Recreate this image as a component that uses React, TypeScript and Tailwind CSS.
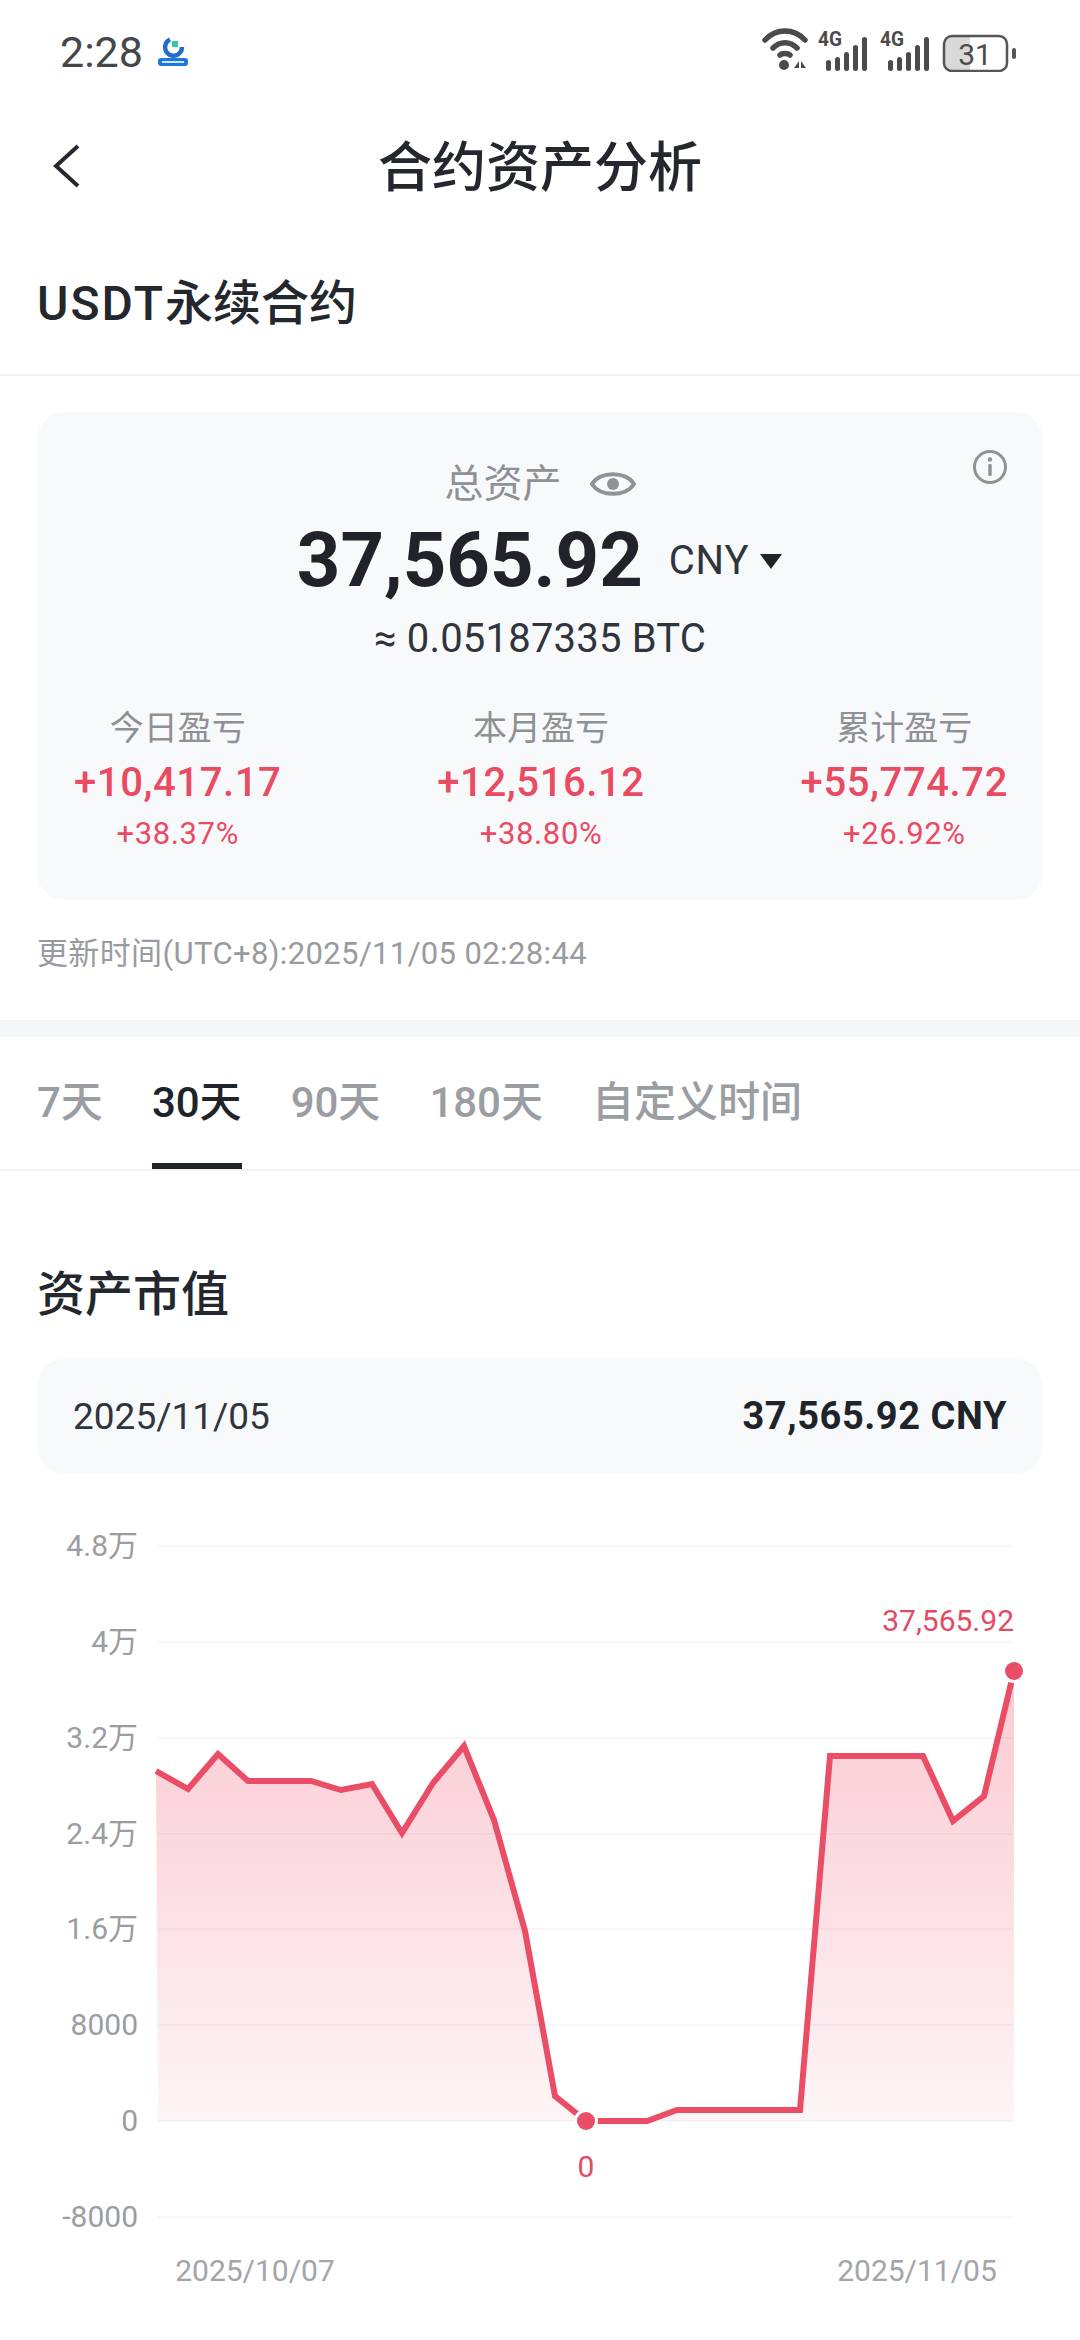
// Contract asset analysis screen
import type { ReactNode } from 'react';

const stats = [
  { label: '今日盈亏', value: '+10,417.17', pct: '+38.37%' },
  { label: '本月盈亏', value: '+12,516.12', pct: '+38.80%' },
  { label: '累计盈亏', value: '+55,774.72', pct: '+26.92%' },
];

const tabs = ['7天', '30天', '90天', '180天', '自定义时间'];

const yTicks = [
  { label: '4.8万', y: 46 },
  { label: '4万', y: 142 },
  { label: '3.2万', y: 238 },
  { label: '2.4万', y: 334 },
  { label: '1.6万', y: 429 },
  { label: '8000', y: 525 },
  { label: '0', y: 621 },
  { label: '-8000', y: 717 },
];

// chart line, y is relative to the top of the svg (page y 1500)
const points: [number, number][] = [
  [156, 271], [188, 289], [218, 254], [248, 281], [279, 281], [311, 281], [341, 290],
  [372, 284], [402, 333], [433, 283], [464, 246], [494, 320], [525, 431], [555, 596],
  [586, 621], [616, 621], [647, 621], [677, 610], [708, 610], [739, 610], [769, 610],
  [800, 610], [830, 256], [861, 256], [892, 256], [923, 256], [953, 321], [984, 296],
  [1014, 171],
];

const linePath = points.map(([x, y]) => `${x},${y}`).join(' ');
const areaPath = `158,621 ${linePath} 1014,621`;

function StatusIcons() {
  return (
    <svg width="262" height="44" viewBox="0 0 262 44" className="block -mt-[4px]">
      {/* wifi */}
      <g fill="none" stroke="#4b4b4b" strokeWidth="5.5" strokeLinecap="round">
        <path d="M3 12 C14 0 32 0 43 12" />
        <path d="M11 20 C18 13 28 13 35 20" />
        <path d="M18 27 C20 25 26 25 28 27" />
      </g>
      <circle cx="22" cy="37" r="5" fill="#4b4b4b" />
      <path d="M32 40 L37 33 V40 Z M39 33 L44 40 H39 Z" fill="#4b4b4b" />
      {/* sim 1 and sim 2 */}
      {[0, 62].map((dx) => (
        <g key={dx} transform={`translate(${dx} 0)`} fill="#4b4b4b">
          <text x="56" y="18" fontSize="21" fontWeight="700" fontFamily="Roboto, sans-serif" textLength="24" lengthAdjust="spacingAndGlyphs">4G</text>
          <rect x="64" y="32" width="5" height="11" rx="2.5" />
          <rect x="73" y="29" width="5" height="14" rx="2.5" />
          <rect x="82" y="24" width="5" height="19" rx="2.5" />
          <rect x="91" y="17" width="5" height="26" rx="2.5" />
          <rect x="100" y="9" width="5" height="34" rx="2.5" />
        </g>
      ))}
      {/* battery */}
      <path d="M190 9 H208 V42 H190 Q183 42 183 35 V16 Q183 9 190 9 Z" fill="#d9d9d9" />
      <rect x="182" y="8" width="63" height="35" rx="8" fill="none" stroke="#555555" strokeWidth="2.5" />
      <rect x="250" y="20" width="4" height="11" rx="2" fill="#555555" />
      <text x="213" y="37" textAnchor="middle" fontSize="30" fontFamily="Roboto, sans-serif" fill="#4b4b4b">31</text>
    </svg>
  );
}

function AppBadge() {
  return (
    <svg width="32" height="30" viewBox="0 0 32 30" className="block ml-[14px]">
      <path d="M13 2.5 A8.5 8.5 0 1 0 25 10" fill="none" stroke="#1f6bd0" strokeWidth="4.5" />
      <rect x="15" y="4" width="6" height="6" fill="#35c8a5" />
      <rect x="1" y="21" width="30" height="8" rx="3" fill="#1f78dc" />
      <rect x="5" y="24" width="22" height="2" fill="#cfe4fb" />
    </svg>
  );
}

function SectionText({ children, className }: { children: ReactNode; className: string }) {
  return <div className={`text-[#24272d] font-medium ${className}`}>{children}</div>;
}

function Chart() {
  return (
    <svg width="1080" height="840" viewBox="0 0 1080 840" className="block">
      <defs>
        <linearGradient id="area" gradientUnits="userSpaceOnUse" x1="0" y1="171" x2="0" y2="621">
          <stop offset="0" stopColor="#f9c0c9" />
          <stop offset="1" stopColor="#fdf3f5" />
        </linearGradient>
      </defs>

      <polygon points={areaPath} fill="url(#area)" fillOpacity="0.85" />

      {yTicks.map((t) => (
        <g key={t.label}>
          <line x1="158" x2="1013" y1={t.y} y2={t.y} stroke="#20232a" strokeOpacity="0.05" strokeWidth="1.5" />
          <text x="138" y={t.y + 10} textAnchor="end" fontSize="30" fill="#9a9da2">{t.label}</text>
        </g>
      ))}

      <polyline points={linePath} fill="none" stroke="#ea4d66" strokeWidth="6" strokeLinejoin="miter" />

      <circle cx="586" cy="621" r="12" fill="#ffffff" />
      <circle cx="586" cy="621" r="9" fill="#ea4d66" />
      <circle cx="1014" cy="171" r="12" fill="#ffffff" />
      <circle cx="1014" cy="171" r="9" fill="#ea4d66" />

      <text x="1014" y="131" textAnchor="end" fontSize="30" fill="#e04c66">37,565.92</text>
      <text x="586" y="677" textAnchor="middle" fontSize="30" fill="#e04c66">0</text>

      <text x="255" y="781" textAnchor="middle" fontSize="30" fill="#a2a5a9">2025/10/07</text>
      <text x="917" y="781" textAnchor="middle" fontSize="30" fill="#a2a5a9">2025/11/05</text>
    </svg>
  );
}

export default function App() {
  return (
    <div className="w-[1080px] h-[2340px] overflow-hidden bg-white [font-family:Roboto,'Noto_Sans_CJK_SC',sans-serif]">
      {/* Status bar */}
      <div className="h-[104px] flex items-center justify-between pl-[60px] pr-[56px]">
        <div className="flex items-center">
          <span className="text-[43px] leading-[48px] text-[#45474b]">2:28</span>
          <AppBadge />
        </div>
        <StatusIcons />
      </div>

      {/* Header */}
      <div className="h-[124px] grid grid-cols-[1fr_auto_1fr] items-center pl-[52px]">
        <svg width="30" height="44" viewBox="0 0 30 44" className="block">
          <polyline points="26,2 4,22 26,42" fill="none" stroke="#25282e" strokeWidth="4" />
        </svg>
        <SectionText className="text-[54px] leading-[64px] -ml-[52px] mt-[5px]">合约资产分析</SectionText>
        <div />
      </div>

      {/* Account */}
      <div className="h-[148px] flex items-center px-[37px] pt-[6px] border-b-2 border-[#f1f2f4]">
        <SectionText className="text-[48px] leading-[56px]">
          <span className="tracking-[2px]">USDT</span>永续合约
        </SectionText>
      </div>

      {/* Total assets card */}
      <div className="relative mx-[37px] mt-[36px] h-[488px] rounded-[28px] bg-[#f8f9fb] pt-[50px]">
        <svg width="36" height="36" viewBox="0 0 36 36" className="absolute right-[35px] top-[37px]">
          <circle cx="18" cy="18" r="15.5" fill="none" stroke="#8f9298" strokeWidth="3" />
          <circle cx="18" cy="10.5" r="2.2" fill="#8f9298" />
          <rect x="16.3" y="15" width="3.4" height="12" rx="1" fill="#8f9298" />
        </svg>

        <div className="flex items-center justify-center h-[44px] gap-[28px]">
          <span className="text-[39px] leading-[44px] text-[#8d9095]">总资产</span>
          <svg width="46" height="32" viewBox="0 0 46 32" className="block">
            <path d="M2 16 C10 3 36 3 44 16 C36 29 10 29 2 16 Z" fill="none" stroke="#8f9298" strokeWidth="4" />
            <circle cx="23" cy="16" r="6" fill="#8f9298" />
          </svg>
        </div>

        <div className="flex items-center justify-center h-[80px] mt-[14px]">
          <span className="text-[76px] leading-[80px] font-bold text-[#20232a]">37,565.92</span>
          <span className="text-[40px] leading-[48px] tracking-[0.02em] text-[#30343c] ml-[26px] mt-[2px]">CNY</span>
          <svg width="24" height="17" viewBox="0 0 24 17" className="block ml-[10px] mt-[2px]">
            <path d="M1 1 H23 L12 16 Z" fill="#20232a" />
          </svg>
        </div>

        <div className="h-[44px] mt-[17px] text-center text-[40px] leading-[44px] tracking-[0.005em] text-[#30343c]">≈ 0.05187335 BTC</div>

        <div className="flex justify-between pl-[37px] pr-[35px] mt-[47px]">
          {stats.map((s) => (
            <div key={s.label} className="flex flex-col items-center">
              <div className="text-[34px] leading-[40px] text-[#8d9095]">{s.label}</div>
              <div className="text-[40px] leading-[44px] font-medium tracking-[0.015em] text-[#e94b63] mt-[13px]">{s.value}</div>
              <div className="text-[31px] leading-[36px] tracking-[0.02em] text-[#e94b63] mt-[11px]">{s.pct}</div>
            </div>
          ))}
        </div>
      </div>

      <div className="h-[120px] pt-[36px] pl-[37px] text-[31px] leading-[36px] tracking-[0.012em] text-[#989ba0]">
        更新时间(UTC+8):2025/11/05 02:28:44
      </div>

      <div className="h-[17px] bg-[#f5f6f7]" />

      {/* Range tabs */}
      <div className="h-[134px] flex gap-[49px] px-[37px] border-b-2 border-[#f1f2f4]">
        {tabs.map((tab) => (
          <div
            key={tab}
            className={
              tab === '30天'
                ? 'h-[132px] pt-[42px] text-[42px] leading-[48px] font-medium text-[#20232a] border-b-[6px] border-[#20232a]'
                : 'h-[132px] pt-[42px] text-[42px] leading-[48px] font-medium text-[#9a9da2]'
            }
          >
            {tab}
          </div>
        ))}
      </div>

      {/* Market value */}
      <div className="h-[188px] pt-[96px] pl-[37px]">
        <SectionText className="text-[48px] leading-[56px]">资产市值</SectionText>
      </div>

      <div className="mx-[37px] h-[115px] rounded-[28px] bg-[#f8f9fb] flex items-center justify-between px-[36px] text-[37px] text-[#30343c]">
        <span>2025/11/05</span>
        <span className="text-[38px] tracking-[0.015em] font-bold text-[#20232a]">37,565.92 CNY</span>
      </div>

      <div className="mt-[26px]">
        <Chart />
      </div>
    </div>
  );
}
